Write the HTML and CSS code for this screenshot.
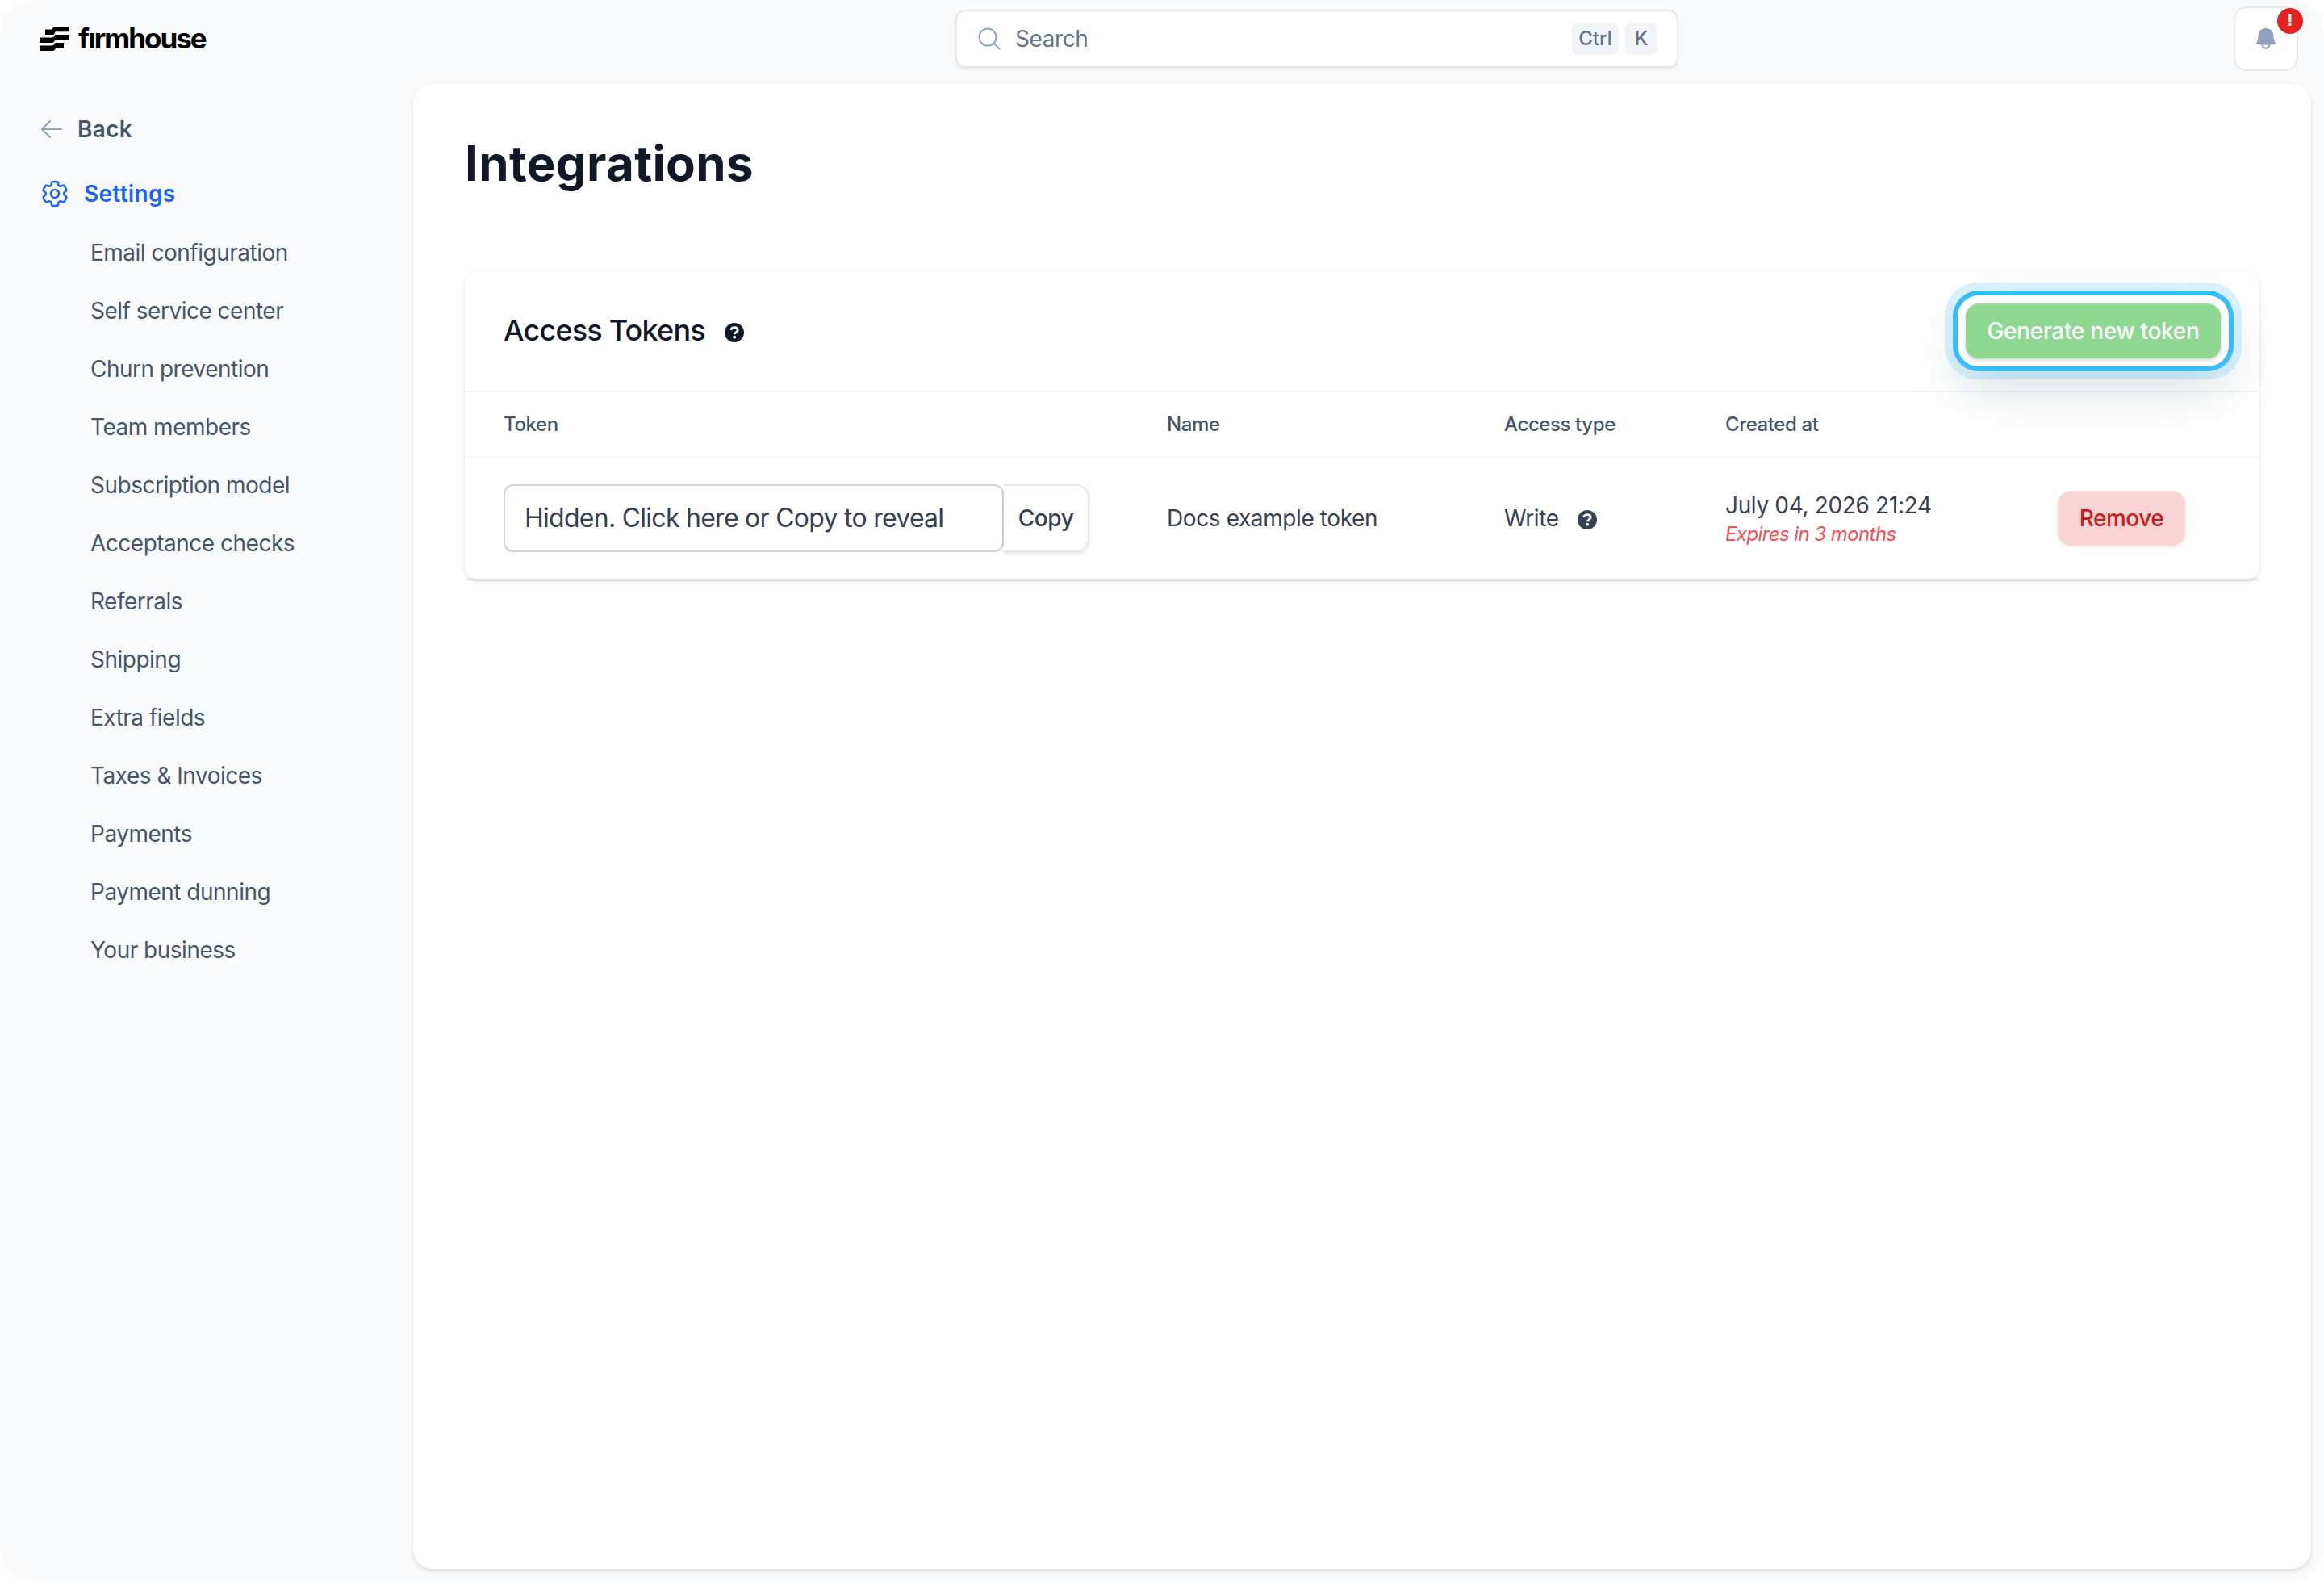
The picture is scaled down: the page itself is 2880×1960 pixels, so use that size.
FILE: index.html
```html
<!DOCTYPE html>
<html lang="en">
<head>
  <meta charset="UTF-8">
  <meta name="viewport" content="width=device-width, initial-scale=1.0">
  <title>Integrations - Firmhouse</title>
  <link rel="stylesheet" href="styles.css">
</head>
<body>
  <div class="app">
    <header class="topbar">
      <a class="logo" href="#">
        <svg class="logo-mark" viewBox="0 0 37 30" fill="#000">
          <path d="M7 3.500H15Q17 0 21 0H37V6.300H20Q19 6.300 18 10H7Z"/>
          <path d="M0 13.500H15Q18 13.500 19 10H37V16.500H20Q19 16.500 17 20H0Z"/>
          <path d="M0 23.500H15Q18 23.500 19 20H30V26.500H20Q19 30 16 30H0Z"/>
        </svg>
        <span class="logo-text">fırmhouse</span>
      </a>
      <div class="search-area">
        <div class="search">
          <svg class="search-icon" viewBox="0 0 28 28" fill="none" stroke="#8fa3bf" stroke-width="2" stroke-linecap="round">
            <circle cx="12" cy="12" r="10.5"/>
            <path d="M19.5 19.5L26.5 26.5"/>
          </svg>
          <span class="search-text">Search</span>
          <kbd class="key-ctrl">Ctrl</kbd>
          <kbd>K</kbd>
        </div>
      </div>
      <button class="bell" type="button">
        <svg class="bell-icon" viewBox="0 0 24 26" fill="#8fa1bc">
          <path d="M12 0C6.500 0 3.200 3.500 2.700 8.500C2.300 12.500 2 15 .2 18.300C-.1 19 .1 19.600 .8 19.700C3 20.100 5 20.300 6.700 20.400C6.900 23.600 9.100 25.800 12 25.800S17.100 23.600 17.300 20.400C19 20.300 21 20.100 23.200 19.700C23.900 19.600 24.100 19 23.800 18.300C22 15 21.700 12.500 21.300 8.500C20.800 3.500 17.500 0 12 0ZM8.800 20.500C10.900 20.700 13.100 20.700 15.200 20.500C15 22.500 13.800 23.800 12 23.800S9 22.500 8.800 20.500Z"/>
        </svg>
        <span class="badge">!</span>
      </button>
    </header>

    <nav class="sidebar">
      <a class="back" href="#">
        <svg class="back-icon" viewBox="0 0 28 24" fill="none" stroke="#8fa3bf" stroke-width="2" stroke-linecap="round" stroke-linejoin="round">
          <path d="M26 12H2M12 2L2 12L12 22"/>
        </svg>
        <span>Back</span>
      </a>
      <a class="settings" href="#">
        <svg class="gear" viewBox="0 0 24 24" fill="none" stroke="#1c64f2" stroke-width="1.5" stroke-linecap="round" stroke-linejoin="round">
          <path d="M9.594 3.940c.09-.542.56-.94 1.110-.94h2.593c.55 0 1.020.398 1.110.94l.213 1.281c.063.374.313.686.645.87.074.04.147.083.22.127.324.196.72.257 1.075.124l1.217-.456a1.125 1.125 0 0 1 1.370.49l1.296 2.247a1.125 1.125 0 0 1-.26 1.431l-1.003.827c-.293.24-.438.613-.431.992a6.759 6.759 0 0 1 0 .255c-.007.378.138.75.43.99l1.005.828c.424.35.534.954.26 1.430l-1.298 2.247a1.125 1.125 0 0 1-1.369.491l-1.217-.456c-.355-.133-.75-.072-1.076.124a6.570 6.570 0 0 1-.22.128c-.331.183-.581.495-.644.869l-.213 1.280c-.09.543-.56.941-1.110.941h-2.594c-.55 0-1.020-.398-1.110-.94l-.213-1.281c-.062-.374-.312-.686-.644-.87a6.520 6.520 0 0 1-.22-.127c-.325-.196-.72-.257-1.076-.124l-1.217.456a1.125 1.125 0 0 1-1.369-.49l-1.297-2.247a1.125 1.125 0 0 1 .26-1.431l1.004-.827c.292-.24.437-.613.43-.992a6.932 6.932 0 0 1 0-.255c.007-.378-.138-.75-.43-.99l-1.004-.828a1.125 1.125 0 0 1-.26-1.430l1.297-2.247a1.125 1.125 0 0 1 1.370-.491l1.216.456c.356.133.751.072 1.076-.124.072-.044.146-.087.22-.128.332-.183.582-.495.644-.869l.214-1.281Z"/>
          <circle cx="12" cy="12" r="3"/>
        </svg>
        <span>Settings</span>
      </a>
      <ul class="menu">
        <li><a href="#">Email configuration</a></li>
        <li><a href="#">Self service center</a></li>
        <li><a href="#">Churn prevention</a></li>
        <li><a href="#">Team members</a></li>
        <li><a href="#">Subscription model</a></li>
        <li><a href="#">Acceptance checks</a></li>
        <li><a href="#">Referrals</a></li>
        <li><a href="#">Shipping</a></li>
        <li><a href="#">Extra fields</a></li>
        <li><a href="#">Taxes &amp; Invoices</a></li>
        <li><a href="#">Payments</a></li>
        <li><a href="#">Payment dunning</a></li>
        <li><a href="#">Your business</a></li>
      </ul>
    </nav>

    <main class="page">
      <h1>Integrations</h1>

      <section class="card">
        <div class="card-header">
          <h2>Access Tokens</h2>
          <svg class="help" viewBox="0 0 24 24">
            <circle cx="12" cy="12" r="12" fill="#111827"/>
            <path d="M7.500 8.800C8.300 6.800 9.900 5.700 12.200 5.700C14.700 5.700 16.200 7 16.200 9C16.200 11.500 12.300 11.600 12.300 14.200" fill="none" stroke="#fff" stroke-width="2.800"/>
            <circle cx="12.200" cy="17.700" r="1.900" fill="#fff"/>
          </svg>
          <button class="btn btn-generate" type="button">Generate new token</button>
        </div>

        <table class="tokens">
          <colgroup>
            <col class="col-token">
            <col class="col-name">
            <col class="col-type">
            <col class="col-created">
            <col>
          </colgroup>
          <thead>
            <tr>
              <th>Token</th>
              <th>Name</th>
              <th>Access type</th>
              <th>Created at</th>
              <th></th>
            </tr>
          </thead>
          <tbody>
            <tr>
              <td>
                <div class="token-field">
                  <div class="token-value">Hidden. Click here or Copy to reveal</div>
                  <button class="copy" type="button">Copy</button>
                </div>
              </td>
              <td><div class="token-name">Docs example token</div></td>
              <td>
                <div class="access">
                  <span>Write</span>
                  <svg class="help" viewBox="0 0 24 24">
                    <circle cx="12" cy="12" r="12" fill="#374151"/>
                    <path d="M7.500 8.800C8.300 6.800 9.900 5.700 12.200 5.700C14.700 5.700 16.200 7 16.200 9C16.200 11.500 12.300 11.600 12.300 14.200" fill="none" stroke="#fff" stroke-width="2.800"/>
                    <circle cx="12.200" cy="17.700" r="1.900" fill="#fff"/>
                  </svg>
                </div>
              </td>
              <td>
                <div class="created">July 04, 2026 21:24</div>
                <div class="expires">Expires in 3 months</div>
              </td>
              <td><button class="btn btn-remove" type="button">Remove</button></td>
            </tr>
          </tbody>
        </table>
      </section>
    </main>
  </div>
</body>
</html>
```
FILE: styles.css
```css
* {
  margin: 0;
  padding: 0;
  box-sizing: border-box;
}

body {
  background: #fff;
  color: #374151;
  font-family: Inter, "Liberation Sans", sans-serif;
  font-size: 28px;
  line-height: 40px;
  letter-spacing: -0.4px;
}

a {
  color: inherit;
  text-decoration: none;
}

button,
kbd {
  font-family: inherit;
}

svg {
  display: block;
  flex-shrink: 0;
}

.app {
  display: grid;
  grid-template-columns: 512px 1fr;
  grid-template-rows: 104px 1fr;
  height: 1960px;
  padding: 0 16px 16px 0;
  border-radius: 44px;
  background: #f8fafc;
}

/* Top bar */
.topbar {
  grid-column: 1 / 3;
  display: flex;
  padding: 8px 16px 0 0;
}

.logo {
  display: flex;
  align-items: flex-start;
  gap: 11px;
  width: 512px;
  padding: 25px 0 0 49px;
}

.logo-mark {
  width: 37px;
  height: 30px;
}

.logo-text {
  margin-top: -4px;
  color: #000;
  font-size: 35px;
  font-weight: 700;
  line-height: 36px;
  letter-spacing: -2px;
}

.search-area {
  flex: 1;
  display: flex;
  justify-content: center;
  padding-top: 4px;
}

.search {
  display: flex;
  align-items: center;
  width: 896px;
  height: 72px;
  padding: 0 24px 0 26px;
  border: 2px solid #e2e8f0;
  border-radius: 12px;
  background: #fff;
  box-shadow: 0 2px 4px rgba(0, 0, 0, 0.05);
}

.search-icon {
  width: 28px;
  height: 28px;
}

.search-text {
  flex: 1;
  margin-left: 18px;
  color: #64748b;
}

kbd {
  width: 40px;
  height: 40px;
  margin-left: 8px;
  border-radius: 8px;
  background: #f1f5f9;
  color: #64748b;
  font-size: 24px;
  font-weight: 500;
  line-height: 40px;
  letter-spacing: 0;
  text-align: center;
}

.key-ctrl {
  width: 58px;
}

.bell {
  position: relative;
  display: flex;
  align-items: center;
  justify-content: center;
  width: 80px;
  height: 80px;
  margin-left: 16px;
  border: 2px solid #e2e8f0;
  border-radius: 16px;
  background: #fff;
}

.bell-icon {
  width: 24px;
  height: 26px;
}

.badge {
  position: absolute;
  top: 0;
  right: -8px;
  width: 32px;
  height: 32px;
  border-radius: 50%;
  background: #e02424;
  color: #fff;
  font-size: 20px;
  font-weight: 700;
  line-height: 31px;
  text-align: center;
}

/* Sidebar */
.sidebar {
  padding: 36px 0 0 50px;
  color: #475569;
}

.back,
.settings {
  display: flex;
  align-items: center;
  height: 40px;
  font-weight: 600;
  letter-spacing: 0.3px;
}

.back-icon {
  width: 28px;
  height: 24px;
  margin-right: 18px;
}

.settings {
  margin: 40px 0 0 -2px;
  color: #1c64f2;
}

.gear {
  width: 40px;
  height: 40px;
  margin-right: 16px;
}

.menu {
  margin: 17px 0 0 62px;
  list-style: none;
  letter-spacing: -0.5px;
}

.menu li {
  height: 72px;
  line-height: 72px;
}

/* Page */
.page {
  padding: 62px 64px 0;
  border-radius: 24px;
  background: #fff;
  box-shadow: 0 2px 6px rgba(0, 0, 0, 0.1), 0 2px 4px -2px rgba(0, 0, 0, 0.1);
}

h1 {
  color: #111827;
  font-size: 60px;
  font-weight: 700;
  line-height: 72px;
  letter-spacing: 0.35px;
}

.card {
  height: 382px;
  margin-top: 98px;
  border-radius: 16px;
  background: #fff;
  box-shadow: 0 2px 6px rgba(0, 0, 0, 0.1), 0 2px 4px -2px rgba(0, 0, 0, 0.1);
}

.card-header {
  display: flex;
  align-items: center;
  height: 150px;
  padding: 0 48px;
  border-bottom: 2px solid #edf2f7;
}

h2 {
  padding-bottom: 2px;
  color: #111827;
  font-size: 36px;
  font-weight: 500;
  letter-spacing: -0.8px;
}

.help {
  width: 24px;
  height: 24px;
}

.card-header .help {
  margin: 4px auto 0 24px;
}

.btn {
  height: 68px;
  border: 0;
  border-radius: 16px;
  font-size: 28px;
  font-weight: 500;
  letter-spacing: -0.3px;
  white-space: nowrap;
}

.btn-generate {
  width: 316px;
  background: #8ed891;
  color: #fff;
  /* highlight ring around the button */
  box-shadow: inset 0 2px 0 rgba(255, 255, 255, 0.15),
    0 2px 4px rgba(0, 0, 0, 0.2),
    0 0 0 10px #fff,
    0 0 0 16px #38bdf8,
    0 0 0 26px rgba(56, 189, 248, 0.18),
    0 28px 64px 8px rgba(15, 80, 90, 0.18);
}

.tokens {
  width: 100%;
  table-layout: fixed;
  border-spacing: 0;
  text-align: left;
}

.col-token {
  width: 870px;
}

.col-name {
  width: 418px;
}

.col-type {
  width: 274px;
}

.col-created {
  width: 412px;
}

th {
  height: 82px;
  border-bottom: 2px solid #edf2f7;
  color: #475569;
  font-size: 24px;
  font-weight: 500;
  letter-spacing: -0.4px;
}

td {
  height: 152px;
  border-bottom: 4px solid rgba(135, 168, 202, 0.15);
}

th:first-child,
td:first-child {
  padding-left: 48px;
}

.token-field {
  display: flex;
  height: 84px;
}

.token-value {
  width: 620px;
  padding-left: 24px;
  border: 2px solid #cbd5e1;
  border-radius: 12px;
  font-size: 32px;
  line-height: 80px;
  letter-spacing: -0.73px;
}

.copy {
  width: 106px;
  border: 2px solid #e2e8f0;
  border-left: 0;
  border-radius: 0 16px 16px 0;
  background: #fff;
  box-shadow: 0 2px 4px rgba(0, 0, 0, 0.1);
  color: #374151;
  font-size: 28px;
  font-weight: 500;
  letter-spacing: -0.4px;
}

.access {
  display: flex;
  align-items: center;
  gap: 23px;
}

.access .help {
  margin-top: 4px;
}

.created {
  padding-top: 2px;
  line-height: 36px;
  letter-spacing: -0.34px;
}

.expires {
  color: #f05252;
  font-size: 24px;
  font-style: italic;
  line-height: 35px;
  letter-spacing: -0.58px;
}

.btn-remove {
  width: 158px;
  background: #fbd5d5;
  color: #c81e1e;
  letter-spacing: -0.5px;
  box-shadow: inset 0 2px 0 rgba(255, 255, 255, 0.15), 0 2px 4px rgba(0, 0, 0, 0.08);
}
```
